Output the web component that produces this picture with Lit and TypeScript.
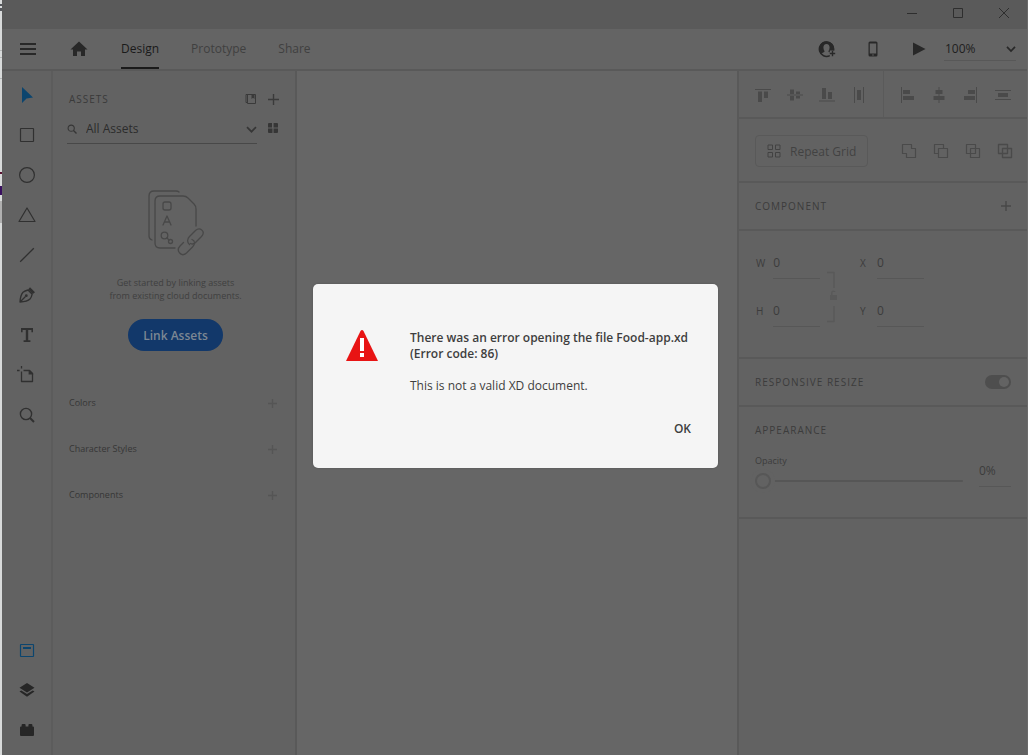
import { LitElement, html, css, svg, TemplateResult } from "lit";
import { customElement } from "lit/decorators.js";

const icon = (w: number, h: number, body: TemplateResult) =>
  html`<svg class="icon" width=${w} height=${h} viewBox="0 0 ${w} ${h}" aria-hidden="true">${body}</svg>`;

const plus = (size: number) => {
  const m = size / 2;
  return icon(size, size, svg`<path d="M${m} 0V${size}M0 ${m}H${size}" fill="none" stroke="currentColor" stroke-width="1.4"/>`);
};

const chevron = (size: number) =>
  icon(size, size, svg`<path d="M1 ${size * 0.28}L${size / 2} ${size * 0.7}L${size - 1} ${size * 0.28}" fill="none" stroke="currentColor" stroke-width="1.7"/>`);

const line = (d: string, w = 1.2) => svg`<path d=${d} fill="none" stroke="currentColor" stroke-width=${w} stroke-linejoin="round"/>`;
const fill = (d: string) => svg`<path d=${d} fill="currentColor" fill-rule="evenodd"/>`;

const tools: [string, TemplateResult][] = [
  ["Select", icon(18, 18, fill("M4 1V17L8.5 12.5L15 11.5Z"))],
  ["Rectangle", icon(18, 18, svg`<rect x="2.5" y="2.5" width="13" height="13" rx=".5" fill="none" stroke="currentColor" stroke-width="1.2"/>`)],
  ["Ellipse", icon(18, 18, svg`<circle cx="9" cy="9" r="7.4" fill="none" stroke="currentColor" stroke-width="1.2"/>`)],
  ["Polygon", icon(18, 18, line("M9 2L17 15.5H1Z"))],
  ["Line", icon(18, 18, line("M2.2 15.8L15.8 2.2", 1.3))],
  ["Pen", icon(18, 18, svg`${line("M2 16C2.2 12 3.2 8.2 5 6.2C6.5 5 8.3 4.4 10 4L14.2 8.2C13.8 10 13.2 11.8 12 13C10 15 6.2 15.8 2 16ZM2 16L7.5 10.5", 1.3)}<circle cx="8.3" cy="9.7" r="1.4" fill="currentColor"/>${fill("M12 1.2L17 6.2L14.8 8L10.2 3.4Z")}`)],
  ["Text", icon(18, 18, fill("M3 2H15V6.2H13.4V4H10.2V14.2H12.4V16H5.6V14.2H7.8V4H4.6V6.2H3Z"))],
  ["Artboard", icon(20, 20, svg`${line("M4.5 6.5V16.5H15.500V8.5L12.500 5.5H6.5M0 5.5H2.600M4.5 1V3.600", 1.3)}${fill("M11.600 5V9.400H16.200V8.600L12.600 5Z")}`)],
  ["Zoom", icon(18, 18, svg`<circle cx="8" cy="8" r="5.6" fill="none" stroke="currentColor" stroke-width="1.4"/>${line("M12 12L16 16", 2)}`)],
];

const panels: [string, TemplateResult][] = [
  ["Libraries", icon(18, 18, svg`<rect x="2.5" y="3.5" width="13" height="12" rx=".5" fill="none" stroke="currentColor" stroke-width="1.2"/><path d="M5 7H13" stroke="currentColor" stroke-width="2"/>`)],
  ["Layers", icon(18, 18, fill("M9 2L16.5 6.7L9 11.4L1.5 6.7ZM3.3 9.4L9 13L14.7 9.4L16.5 10.6L9 15.8L1.5 10.6Z"))],
  ["Plugins", icon(18, 18, fill("M2 6.5Q2 5.5 3 5.5H3.6V4Q3.6 3 4.6 3H6.6Q7.6 3 7.6 4V5.5H10.4V4Q10.4 3 11.4 3H13.4Q14.4 3 14.4 4V5.5H15Q16 5.5 16 6.5V14Q16 15 15 15H3Q2 15 2 14Z"))],
];

const vAlign: [string, TemplateResult][] = [
  ["Align top", icon(16, 16, fill("M0 2H16V3H0ZM3 4.5H7V15H3ZM9 4.5H13V11H9Z"))],
  ["Align middle", icon(16, 16, fill("M0 7.5H16V8.5H0ZM3 2.5H7V13.5H3ZM9 4.5H13V11.5H9Z"))],
  ["Align bottom", icon(16, 16, fill("M0 13.5H16V14.5H0ZM3 1H7V12H3ZM9 5H13V12H9Z"))],
  ["Distribute horizontally", icon(16, 16, fill("M3 0H4V16H3ZM12 0H13V16H12ZM6 3H10V13H6Z"))],
];
const hAlign: [string, TemplateResult][] = [
  ["Align left", icon(16, 16, fill("M2 0H3V16H2ZM4 3H11V7H4ZM4 9H15V13H4Z"))],
  ["Align center", icon(16, 16, svg`${fill("M7.5 0H8.5V3H7.5ZM7.5 7H8.5V9H7.5ZM7.5 13H8.5V16H7.5Z")}${fill("M4.5 3H11.5V7H4.5ZM2.5 9H13.5V13H2.5Z")}`)],
  ["Align right", icon(16, 16, fill("M13 0H14V16H13ZM5 3H12V7H5ZM1 9H12V13H1Z"))],
  ["Distribute vertically", icon(16, 16, fill("M0 3H16V4H0ZM0 12H16V13H0ZM3 6H13V10H3Z"))],
];
const booleans: [string, TemplateResult][] = [
  ["Add", icon(16, 16, line("M1.5 1.5H10.5V5.5H14.5V14.5H5.5V10.5H1.5Z"))],
  ["Subtract", icon(16, 16, line("M5.5 10.5H1.5V1.5H10.5V5.5M5.5 5.5H14.5V14.5H5.5Z"))],
  ["Intersect", icon(16, 16, line("M1.5 1.5H10.5V10.5H1.5ZM5.5 5.5H14.5V14.5H5.5Z"))],
  ["Exclude overlap", icon(16, 16, line("M1.5 1.5H10.5V10.5H1.5ZM5.5 5.5H14.5V14.5H5.5Z", 1.4))],
];

const iconButtons = (items: [string, TemplateResult][], cls: string) =>
  items.map(([label, glyph]) => html`<button class=${cls} aria-label=${label}>${glyph}</button>`);

const base = css`
  :host { display: block; box-sizing: border-box; }
  *, *::before { box-sizing: border-box; }
  button, input, select {
    margin: 0; padding: 0; border: 0; border-radius: 0; background: none;
    color: inherit; font: inherit; appearance: none; outline: none;
  }
  button { display: flex; align-items: center; justify-content: center; }
  h1, h2, p { margin: 0; font-size: inherit; font-weight: 400; }
  .icon { display: block; flex: none; }
  .caption { font-size: 10px; line-height: 16px; letter-spacing: 1px; text-transform: uppercase; }
`;

@customElement("xd-header")
class XdHeader extends LitElement {
  static styles = [base, css`
    .title { display: flex; justify-content: flex-end; height: 29px; background: #5a5a5a; color: #2e2e2e; }
    .win { width: 46px; height: 26px; }
    .bar { display: flex; align-items: center; height: 42px; padding-left: 1px; border-bottom: 2px solid #595959; background: #646464; color: #282828; }
    .menu { width: 50px; height: 40px; }
    .home { width: 52px; height: 40px; }
    .tabs { display: flex; gap: 32px; margin-left: 16px; color: #404040; font-size: 12px; line-height: 18px; }
    .tab { display: block; padding: 11px 0 9px; border-bottom: 2px solid transparent; color: inherit; text-decoration: none; }
    .tab.on { color: #1a1a1a; border-color: #1a1a1a; }
    .right { display: flex; align-items: center; margin-left: auto; padding-right: 11px; }
    .act { width: 46px; height: 40px; }
    .zoom { position: relative; display: flex; align-items: center; margin-left: 2px; width: 72px; height: 24px; border-bottom: 1px solid #585858; }
    .zoom select { width: 100%; padding-left: 1px; font-size: 12px; line-height: 16px; color: #202020; }
    .zoom .icon { position: absolute; right: 0; pointer-events: none; }
  `];
  render() {
    return html`
      <div class="title">
        <button class="win" aria-label="Minimize">${icon(12, 12, line("M1 6.5H11", 1))}</button>
        <button class="win" aria-label="Maximize">${icon(12, 12, line("M1.5 1.5H10.5V10.5H1.5Z", 1))}</button>
        <button class="win" aria-label="Close">${icon(12, 12, line("M1 1L11 11M11 1L1 11", 1))}</button>
      </div>
      <div class="bar">
        <button class="menu" aria-label="Menu">${icon(16, 14, fill("M0 1H16V3H0ZM0 6H16V8H0ZM0 11H16V13H0Z"))}</button>
        <button class="home" aria-label="Home">${icon(18, 16, fill("M9 .5L17.5 8.5H15V15H11V10.5H7V15H3V8.5H.5Z"))}</button>
        <nav class="tabs">
          <a class="tab on" href="#design">Design</a>
          <a class="tab" href="#prototype">Prototype</a>
          <a class="tab" href="#share">Share</a>
        </nav>
        <div class="right">
          <button class="act" aria-label="Invite">${icon(18, 18, svg`
            <path d="M11.8 15.6A7.2 7.2 0 1 1 15.6 10.5" fill="none" stroke="currentColor" stroke-width="1.4"/>
            ${fill("M8.5 1.2A7.3 7.3 0 0 0 3.4 13.7C4.2 12.2 6.6 12.4 6.6 11.2C4.6 8.6 5 4 8.5 4S12.4 8.6 10.4 11.2C10.4 11.9 11 12.1 11.8 12.3V10.5H15.6A7.3 7.3 0 0 0 8.5 1.2Z")}
            ${line("M14.5 10.8V16.2M11.8 13.5H17.2", 1.4)}`)}</button>
          <button class="act" aria-label="Device preview">${icon(12, 16, fill("M3 .5H9Q10.5 .5 10.5 2V14Q10.5 15.5 9 15.5H3Q1.5 15.5 1.5 14V2Q1.5 .5 3 .5ZM2.8 2.5V12.5H9.2V2.5ZM5.2 13.4V14.5H6.8V13.4Z"))}</button>
          <button class="act" aria-label="Desktop preview">${icon(14, 14, fill("M1 .5L13.5 7L1 13.5Z"))}</button>
          <div class="zoom">
            <select aria-label="Zoom level"><option>100%</option></select>${chevron(10)}
          </div>
        </div>
      </div>`;
  }
}

@customElement("xd-rail")
class XdRail extends LitElement {
  static styles = [base, css`
    :host { width: 51px; border-right: 2px solid #5c5c5c; color: #303030; }
    .rail { display: flex; flex-direction: column; height: 100%; padding: 4px 0 5px; }
    .tool { height: 40px; width: 100%; }
    .tool:first-child, .low .tool:first-child { color: #0c456e; }
    .low { margin-top: auto; }
    .low .tool:not(:first-child) { color: #262626; }
  `];
  render() {
    return html`<div class="rail">
      <div>${iconButtons(tools, "tool")}</div>
      <div class="low">${iconButtons(panels, "tool")}</div>
    </div>`;
  }
}

@customElement("xd-assets")
class XdAssets extends LitElement {
  static styles = [base, css`
    :host { width: 244px; border-right: 2px solid #595959; color: #363636; padding: 16px 11px 0 14px; }
    .head { display: flex; align-items: center; height: 24px; padding-left: 2px; color: #3a3a3a; }
    .head .caption { flex: 1; }
    .sq { width: 22px; height: 24px; }
    .find { display: flex; align-items: flex-start; gap: 5px; }
    .pick { position: relative; flex: 1; display: flex; align-items: center; height: 33px; padding-top: 4px; border-bottom: 1px solid #484848; }
    .pick select { flex: 1; padding-left: 9px; font-size: 12px; line-height: 16px; color: #2c2c2c; }
    .pick .down { position: absolute; right: 0; pointer-events: none; }
    .grid { width: 22px; height: 34px; }
    .empty { display: flex; flex-direction: column; align-items: center; padding: 45px 0 29px; color: #484848; }
    .msg { margin-top: 20px; font-size: 9px; line-height: 13px; text-align: center; color: #404040; }
    .link { margin-top: 17px; height: 32px; padding: 0 15px; border-radius: 16px; background: #12386a; color: #7c8793; font-size: 12px; font-weight: 600; }
    .row { display: flex; align-items: center; justify-content: space-between; height: 46px; padding: 0 4px 0 2px; font-size: 9px; line-height: 14px; }
    .add { width: 16px; height: 16px; color: #555555; }
  `];
  render() {
    return html`
      <div class="head">
        <h2 class="caption">Assets</h2>
        <button class="sq" aria-label="Manage libraries">${icon(12, 12, svg`${line("M2.5 2V10.5H10.5V1.5H1M1 1.5V9.5H2", 1)}${fill("M6.5 1.5H9.5V6L8 4.8L6.5 6Z")}`)}</button>
        <button class="sq" aria-label="Add assets">${plus(11)}</button>
      </div>
      <div class="find">
        <div class="pick">
          ${icon(10, 10, svg`<circle cx="4.2" cy="4.2" r="3.1" fill="none" stroke="currentColor" stroke-width="1.1"/>${line("M6.5 6.5L9.5 9.5", 1.4)}`)}
          <select aria-label="Filter assets"><option>All Assets</option></select>
          <span class="down">${chevron(11)}</span>
        </div>
        <button class="grid" aria-label="Grid view">${icon(10, 10, fill("M1 0H4V4.4H0V1Q0 0 1 0ZM5.6 0H9Q10 0 10 1V4.4H5.6ZM0 5.6H4.4V10H1Q0 10 0 9ZM5.6 5.6H10V9Q10 10 9 10H5.6Z"))}</button>
      </div>
      <div class="empty">
        ${icon(56, 66, svg`
          <g fill="none" stroke="currentColor" stroke-width="1.3" stroke-linecap="round" stroke-linejoin="round">
            <path d="M31 2Q30 1 28 1H6Q1 1 1 6V46Q1 49 4 50"/>
            <path d="M27 58H12Q7 58 7 53V11Q7 6 12 6H35Q38 6 40 8L46 14Q48 16 48 19V36"/>
            <rect x="15" y="12" width="8" height="8" rx="2"/>
            <path d="M15 35L19 26L23 35M16.4 32H21.6"/>
            <circle cx="16.5" cy="45.5" r="3.3"/><circle cx="22.5" cy="51.5" r="2"/><path d="M19 48L21 50"/>
            <path d="M42.500 53.500C44.500 54.500 46 54 47.500 52.500L53.500 46.500C58 41.500 52 36.500 47.500 40.500L41.500 46.500C39 49 39 52.500 41.500 54.500"/>
            <path d="M35.500 52.500L32 56C27.500 61 33.500 67.500 38.500 63L44.500 57C47.500 54 47 50.500 44 49.500"/>
          </g>`)}
        <p class="msg">Get started by linking assets<br>from existing cloud documents.</p>
        <button class="link">Link Assets</button>
      </div>
      ${["Colors", "Character Styles", "Components"].map((name) => html`
        <div class="row"><h2>${name}</h2><button class="add" aria-label="Add ${name}">${plus(9)}</button></div>`)}
    `;
  }
}

@customElement("xd-inspector")
class XdInspector extends LitElement {
  static styles = [base, css`
    :host { width: 290px; border-left: 2px solid #595959; color: #3c3c3c; }
    .sec { display: flex; align-items: center; justify-content: space-between; height: 48px; padding: 0 16px; border-bottom: 2px solid #595959; }
    .aligns { padding: 0 8px; }
    .aligns .group { padding-top: 2px; }
    .group { display: flex; color: #4a4a4a; }
    .cell { width: 32px; height: 32px; }
    .rule { align-self: stretch; width: 1px; background: #5a5a5a; }
    .ops { height: 64px; padding: 2px 6px 0 16px; }
    .repeat { gap: 9px; height: 32px; padding: 0 11px; border: 1px solid #595959; border-radius: 4px; font-size: 12px; color: #424242; }
    .make { color: #484848; }
    .size { display: grid; grid-template-columns: 64px 40px 64px; grid-template-rows: 48px 48px; align-content: start; justify-content: start; height: 128px; padding: 8px 17px; }
    .field { display: flex; align-items: center; gap: 8px; font-size: 10px; }
    .field label { min-width: 9px; }
    .field input { flex: 1; min-width: 0; height: 32px; border-bottom: 1px solid #575757; font-size: 12px; line-height: 16px; }
    .lock { grid-column: 2; grid-row: 1 / 3; align-self: center; padding: 20px 0 0 7px; color: #595959; }
    .field.x { grid-column: 3; }
    .switch { position: relative; width: 26px; height: 14px; border-radius: 7px; background: #4e4e4e; }
    .switch::before { content: ""; position: absolute; right: 2px; top: 2px; width: 10px; height: 10px; border-radius: 5px; background: #636363; }
    .look { display: block; height: 112px; padding-top: 15px; }
    .opacity { display: grid; grid-template-columns: 1fr 32px; column-gap: 16px; margin-top: 15px; }
    .opacity label { grid-column: 1; font-size: 9px; line-height: 16px; }
    .opacity .val { grid-column: 2; grid-row: 1 / 3; height: 34px; width: 32px; padding-top: 2px; border-bottom: 1px solid #575757; font-size: 12px; }
    .slider { grid-column: 1; width: 100%; height: 24px; }
    .slider::-webkit-slider-runnable-track { height: 2px; background: #565656; border-radius: 1px; }
    .slider::-webkit-slider-thumb { appearance: none; width: 16px; height: 16px; margin-top: -7px; border: 2px solid #575757; border-radius: 8px; background: #626262; box-shadow: 0 0 0 4px #626262; }
  `];
  field(id: string, cls = "") {
    return html`<div class="field ${cls}"><label for=${id}>${id}</label><input id=${id} value="0" /></div>`;
  }
  render() {
    return html`
      <section class="sec aligns">
        <div class="group">${iconButtons(vAlign, "cell")}</div>
        <div class="rule"></div>
        <div class="group">${iconButtons(hAlign, "cell")}</div>
      </section>
      <section class="sec ops">
        <button class="repeat">${icon(14, 14, line("M1 1H5.500V5.500H1ZM8.500 1H13V5.500H8.500ZM1 8.500H5.500V13H1ZM8.500 8.500H13V13H8.500Z", 1))}Repeat Grid</button>
        <div class="group">${iconButtons(booleans, "cell")}</div>
      </section>
      <section class="sec">
        <h2 class="caption">Component</h2>
        <button class="make" aria-label="Make component">${plus(10)}</button>
      </section>
      <section class="sec size">
        ${this.field("W")}
        <div class="lock">${icon(12, 52, svg`${line("M0 1.500H7V17M7 35V50.500H0", 1.500)}${fill("M3 24H10V29H3ZM4 24V22Q4 19.500 6.500 19.500Q8 19.500 8.500 21H7Q5.500 20.500 5.500 22V24Z")}`)}</div>
        ${this.field("X", "x")}
        ${this.field("H")}
        ${this.field("Y", "x")}
      </section>
      <section class="sec">
        <label class="caption" for="resize">Responsive Resize</label>
        <input class="switch" id="resize" type="checkbox" role="switch" checked />
      </section>
      <section class="sec look">
        <h2 class="caption">Appearance</h2>
        <div class="opacity">
          <label for="opacity">Opacity</label>
          <input class="slider" id="opacity" type="range" min="0" max="100" value="0" />
          <input class="val" aria-label="Opacity value" value="0%" />
        </div>
      </section>`;
  }
}

@customElement("xd-alert")
class XdAlert extends LitElement {
  static styles = [base, css`
    :host { width: 405px; }
    .box {
      display: grid; grid-template-columns: 32px 1fr; column-gap: 32px;
      width: 100%; padding: 46px 27px 28px 33px; border-radius: 5px;
      background: #f5f5f5; color: #3e3e3e; font-size: 12px; line-height: 16px;
      box-shadow: 0 0 2px #505050;
    }
    h1 { font-weight: 600; white-space: nowrap; }
    .text p { margin-top: 16px; }
    .ok { grid-column: 2; justify-self: end; height: 22px; margin-top: 24px; font-weight: 600; }
  `];
  render() {
    return html`<div class="box" role="alertdialog" aria-labelledby="t" aria-describedby="d">
      ${icon(32, 32, svg`<path d="M14.500 1Q16 -1 17.500 1L32 31H0Z" fill="#e81414"/><path d="M14 8H18V21H14ZM14 23H18V27H14Z" fill="#fff"/>`)}
      <div class="text">
        <h1 id="t">There was an error opening the file Food-app.xd<br>(Error code: 86)</h1>
        <p id="d">This is not a valid XD document.</p>
      </div>
      <button class="ok">OK</button>
    </div>`;
  }
}

@customElement("app-root")
class AppRoot extends LitElement {
  static styles = css`
    :host {
      display: flex; min-height: 100vh; box-sizing: border-box; background: #626262;
      border-right: 1px solid #6a6a6a;
      font-family: "Open Sans", "Noto Sans", sans-serif;
    }
    .behind {
      width: 2px;
      background: linear-gradient(#d8dada 4px, #55575c 4px 6px, #d8dada 6px 8px, #55575c 8px 11px, #d8dada 11px 50px,
        #b4b6b6 50px 51px, #d8dada 51px 57px, #b4b6b6 57px 58px, #d8dada 58px 78px, #b4b6b6 78px 79px,
        #d8dada 79px 172px, #5a1030 172px 174px, #d8dada 174px 186px, #3a1060 186px 195px, #d8dada 195px 201px,
        #b0b0b0 201px 223px, #d8dada 223px);
    }
    .window { position: relative; flex: 1; display: flex; flex-direction: column; }
    .body { flex: 1; display: flex; }
    .canvas { flex: 1; background: #666666; }
    .veil { position: absolute; inset: 0; display: flex; align-items: center; justify-content: center; padding: 0 0 3px 2px; }
  `;
  render() {
    return html`<div class="behind"></div><div class="window">
      <xd-header></xd-header>
      <div class="body">
        <xd-rail></xd-rail>
        <xd-assets></xd-assets>
        <main class="canvas"></main>
        <xd-inspector></xd-inspector>
      </div>
      <div class="veil"><xd-alert></xd-alert></div>
    </div>`;
  }
}
